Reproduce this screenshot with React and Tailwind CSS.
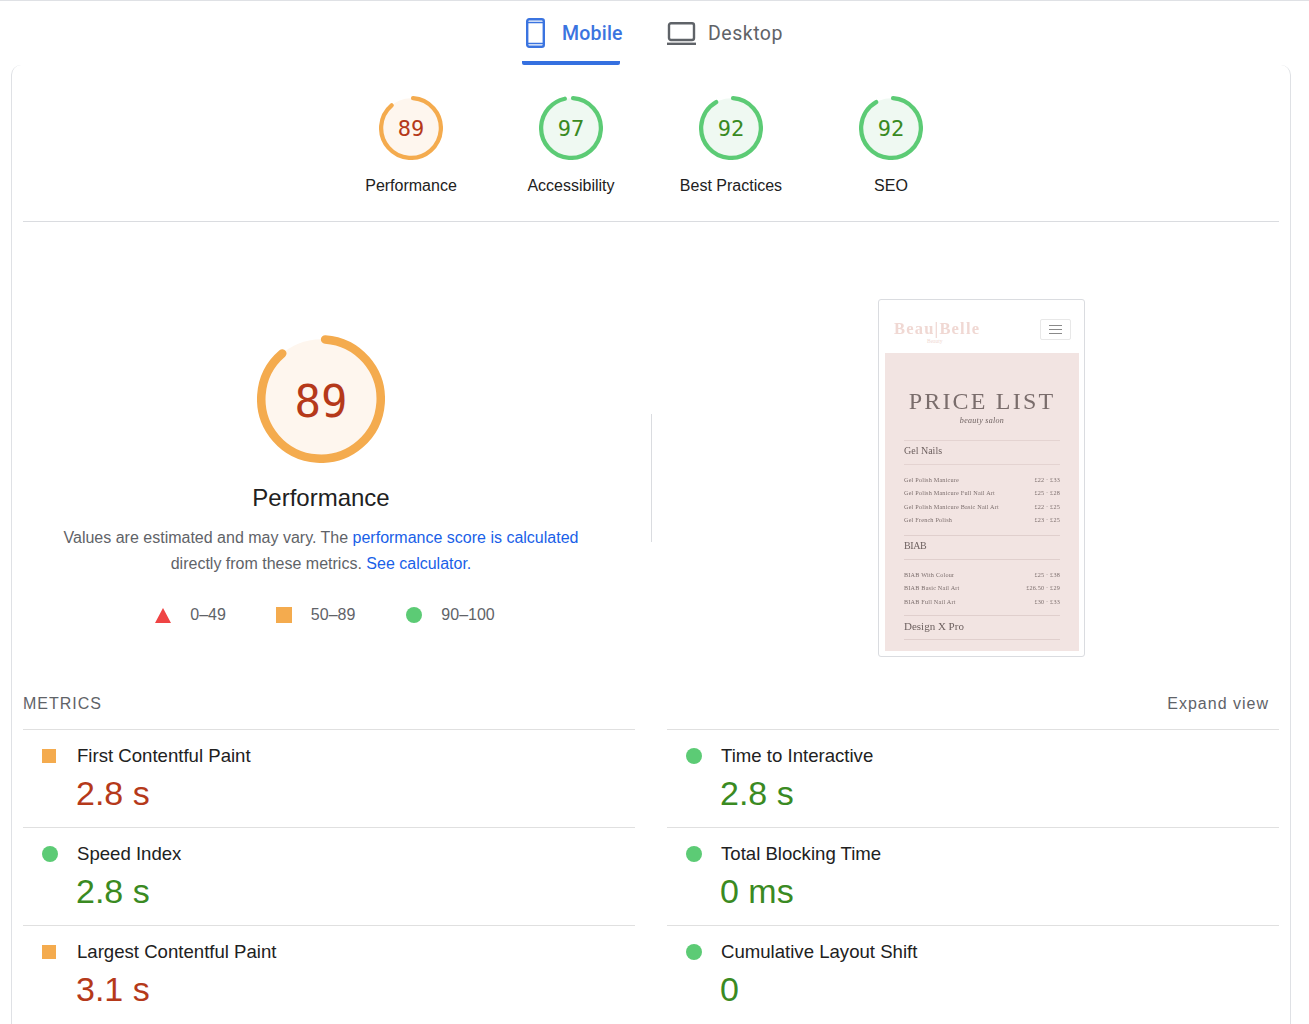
import React from "react";

const sans = "font-['Liberation_Sans',Arial,sans-serif]";

function PhoneIcon() {
  return (
    <svg width="19" height="30" viewBox="0 0 19 30" fill="none" stroke="#3b74e0" strokeWidth="2.4" className="shrink-0">
      <rect x="1.2" y="1.2" width="16.6" height="27.6" rx="2" />
      <path d="M1 4.5h17M1 25.5h17" strokeWidth="1.6" />
    </svg>
  );
}

function LaptopIcon() {
  return (
    <svg width="29" height="23" viewBox="0 0 29 23" fill="none" stroke="#5f6368" strokeWidth="2.4" className="shrink-0">
      <rect x="2" y="1.2" width="25" height="16.8" rx="2" />
      <path d="M0 21.8h29" />
    </svg>
  );
}

const tones = {
  orange: { arc: "#f4ab4e", fill: "#fef6ee", text: "text-[#b5391a]" },
  green: { arc: "#5ccb75", fill: "#eff9f2", text: "text-[#3a8a22]" },
};

function Gauge({ score, tone, size, textClass }) {
  const t = tones[tone];
  return (
    <div className={`relative ${size}`}>
      <svg viewBox="0 0 120 120" className="w-full h-full">
        <circle cx="60" cy="60" r="56" fill={t.fill} />
        <circle
          cx="60"
          cy="60"
          r="56"
          fill="none"
          stroke={t.arc}
          strokeWidth="8"
          strokeLinecap="round"
          strokeDasharray={`${(score / 100) * 346} 352`}
          transform="rotate(-86 60 60)"
        />
      </svg>
      <div className={`absolute inset-0 flex items-center justify-center font-['DejaVu_Sans_Mono',monospace] ${t.text} ${textClass}`}>
        {score}
      </div>
    </div>
  );
}

function ScoreItem({ score, tone, label }) {
  return (
    <div className="w-40 flex flex-col items-center">
      <Gauge score={score} tone={tone} size="w-16 h-16" textClass="text-[22px]" />
      <div className="mt-[16px] text-base leading-[20px] text-[#212121]">{label}</div>
    </div>
  );
}

function Triangle() {
  return (
    <svg width="16" height="15" viewBox="0 0 16 15">
      <path d="M8 0l8 15H0z" fill="#ef4444" />
    </svg>
  );
}

function Square({ className }) {
  return <div className={`w-4 h-4 bg-[#f4ab4e] shrink-0 ${className || ""}`} />;
}

function Dot({ className }) {
  return <div className={`w-4 h-4 rounded-full bg-[#5ccb75] shrink-0 ${className || ""}`} />;
}

function PriceRow({ name, price }) {
  return (
    <div className="flex justify-between h-[13.6px] items-center text-[6.2px] tracking-[0.2px] text-[#7d6f6e]">
      <span>{name}</span>
      <span>{price}</span>
    </div>
  );
}

function ScreenshotThumb() {
  return (
    <div className="w-[207px] h-[358px] border border-[#dadce0] rounded-[3px] pl-[6px] pr-[5px] py-[6px] bg-white font-['Liberation_Serif',serif] shrink-0">
      <div className="h-[47px] flex items-start justify-between pl-[9px] pr-[8px] pt-[13px]">
        <div className="flex flex-col">
          <span className="text-[16.5px] leading-[20px] font-bold tracking-[1.2px] text-[#f0d8d3] blur-[0.3px]">Beau|Belle</span>
          <span className="text-[5.5px] leading-[5px] pl-[33px] text-[#f0d8d3]">Beauty</span>
        </div>
        <div className="w-[31px] h-[21px] border border-[#e8e8e8] rounded-[2px] flex flex-col items-center justify-center gap-[3px]">
          <div className="w-[13px] h-px bg-[#8a8a8a]" />
          <div className="w-[13px] h-px bg-[#8a8a8a]" />
          <div className="w-[13px] h-px bg-[#8a8a8a]" />
        </div>
      </div>
      <div className="h-[298px] bg-[#f2e4e2] px-[19px] pt-[33px] blur-[0.2px]">
        <div className="text-[24px] leading-[30px] tracking-[2.2px] text-center text-[#7a6d6c] whitespace-nowrap">PRICE LIST</div>
        <div className="text-[8px] leading-[10px] -mt-[0.5px] tracking-[0.3px] italic text-center text-[#6e6160]">beauty salon</div>
        <div className="mt-[14px] border-t border-[#e4d3d1] h-[24px] pb-[4px] flex items-center text-[10px] text-[#6e6160]">Gel Nails</div>
        <div className="border-t border-[#e4d3d1] pt-[8px] h-[71px]">
          <PriceRow name="Gel Polish Manicure" price="£22 · £33" />
          <PriceRow name="Gel Polish Manicure Full Nail Art" price="£25 · £28" />
          <PriceRow name="Gel Polish Manicure Basic Nail Art" price="£22 · £25" />
          <PriceRow name="Gel French Polish" price="£23 · £25" />
        </div>
        <div className="border-t border-[#e0cfcd] h-[24px] pb-[3px] flex items-center text-[10px] tracking-[-0.4px] text-[#6e6160]">BIAB</div>
        <div className="border-t border-[#e0cfcd] pt-[8px] h-[56px]">
          <PriceRow name="BIAB With Colour" price="£25 · £38" />
          <PriceRow name="BIAB Basic Nail Art" price="£26.50 · £29" />
          <PriceRow name="BIAB Full Nail Art" price="£30 · £33" />
        </div>
        <div className="border-t border-b border-[#e0cfcd] h-[25px] pb-[2px] flex items-center text-[11px] text-[#6e6160]">Design X Pro</div>
      </div>
    </div>
  );
}

const metrics = [
  { name: "First Contentful Paint", value: "2.8 s", icon: "square", col: "orange" },
  { name: "Time to Interactive", value: "2.8 s", icon: "dot", col: "green" },
  { name: "Speed Index", value: "2.8 s", icon: "dot", col: "green" },
  { name: "Total Blocking Time", value: "0 ms", icon: "dot", col: "green" },
  { name: "Largest Contentful Paint", value: "3.1 s", icon: "square", col: "orange" },
  { name: "Cumulative Layout Shift", value: "0", icon: "dot", col: "green" },
];

function Metric({ m }) {
  return (
    <div className="h-[98px] border-t border-[#e0e0e0] pl-[19px] pt-[15px]">
      <div className="flex items-center h-[22px]">
        {m.icon === "square" ? <Square className="w-[14px] h-[14px]" /> : <Dot />}
        <span className={`text-[18.6px] text-[#212121] ${m.icon === "square" ? "ml-[21px]" : "ml-[19px]"}`}>{m.name}</span>
      </div>
      <div className={`ml-[34px] mt-[6px] text-[34px] leading-[40px] ${tones[m.col].text}`}>{m.value}</div>
    </div>
  );
}

export default function App() {
  return (
    <div className={`h-screen overflow-hidden bg-white border-t border-[#dfe1e5] ${sans}`}>
      <div className="flex justify-center h-[64px] font-['Roboto',sans-serif] text-[19.5px] tracking-[0.2px] pr-[4px]">
        <div className="w-[98px] h-full border-b-4 border-[#3570e0] rounded-b-[2px] flex items-start pt-[17px] pl-[4px]">
          <PhoneIcon />
          <span className="ml-[17px] mt-px leading-[29px] font-medium whitespace-nowrap text-[#3b74e0]">Mobile</span>
        </div>
        <div className="ml-[47px] h-full flex items-start pt-[21px]">
          <LaptopIcon />
          <span className="ml-[12px] -mt-[3px] leading-[29px] tracking-[0.5px] text-[#5f6368]">Desktop</span>
        </div>
      </div>

      <div className="ml-[11px] mr-[18px] border-x border-[#dfe1e5] rounded-t-[10px] px-[11px] min-h-[1000px]">
        <div className="h-[157px] border-b border-[#dadce0] flex justify-center pt-[31px]">
          <ScoreItem score={89} tone="orange" label="Performance" />
          <ScoreItem score={97} tone="green" label="Accessibility" />
          <ScoreItem score={92} tone="green" label="Best Practices" />
          <ScoreItem score={92} tone="green" label="SEO" />
        </div>

        <div className="flex h-[460px]">
          <div className="w-[596px] flex flex-col items-center pt-[113px]">
            <Gauge score={89} tone="orange" size="w-32 h-32" textClass="text-[44px] pt-[5px]" />
            <div className="mt-[20px] text-[24px] leading-[30px] text-[#212121]">Performance</div>
            <p className="mt-[12px] text-base leading-[26px] text-center text-[#5f6368]">
              Values are estimated and may vary. The <span className="text-[#1a5fe8]">performance score is calculated</span>
              <br />
              directly from these metrics. <span className="text-[#1a5fe8]">See calculator.</span>
            </p>
            <div className="mt-[25px] flex items-center text-base leading-[26px] text-[#5f6368] ml-[8px]">
              <Triangle />
              <span className="ml-[19px]">0–49</span>
              <Square className="ml-[50px]" />
              <span className="ml-[19px]">50–89</span>
              <Dot className="ml-[51px]" />
              <span className="ml-[19px]">90–100</span>
            </div>
          </div>
          <div className="ml-[32px] mt-[192px] w-px h-[128px] bg-[#dadce0]" />
          <div className="ml-[226px] pt-[77px]">
            <ScreenshotThumb />
          </div>
        </div>

        <div className="flex justify-between items-center h-[47px] pb-[4px] tracking-[1px] text-base text-[#5f6368] pr-[10px]">
          <span>METRICS</span>
          <span>Expand view</span>
        </div>
        <div className="grid grid-cols-2 gap-x-[32px]">
          {metrics.map((m) => (
            <Metric key={m.name} m={m} />
          ))}
        </div>
      </div>
    </div>
  );
}
